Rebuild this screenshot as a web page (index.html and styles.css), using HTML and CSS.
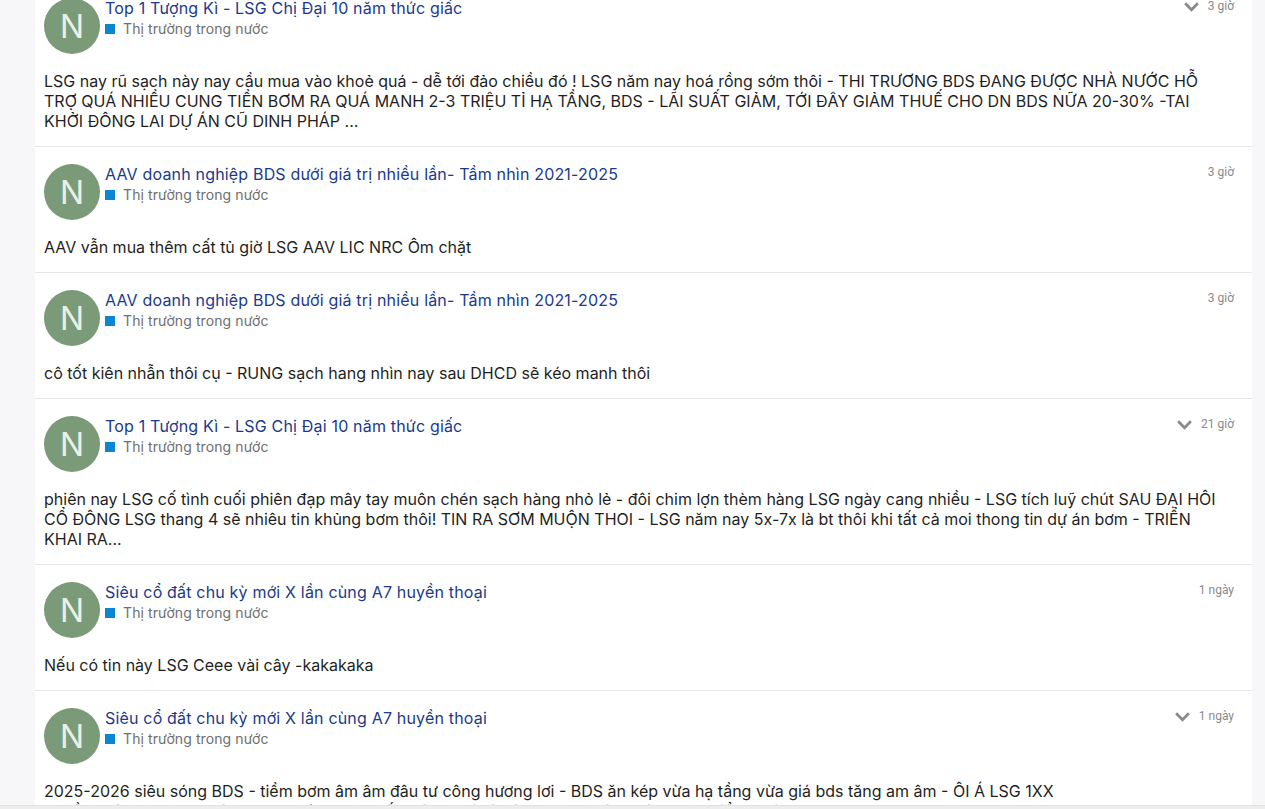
FILE: index.html
```html
<!DOCTYPE html>
<html lang="vi">
<head>
  <meta charset="UTF-8">
  <title>Thị trường trong nước</title>
  <link rel="stylesheet" href="styles.css">
</head>
<body>
  <main class="page">
    <!-- Danh sách bài viết -->
    <div class="feed">

      <article class="post">
        <div class="post-head">
          <div class="avatar">N</div>
          <div class="post-info">
            <a class="post-title" href="#">Top 1 Tượng Kì - LSG Chị Đại 10 năm thức giấc</a>
            <div class="post-cat"><span class="cat-dot"></span>Thị trường trong nước</div>
          </div>
          <div class="post-meta">
            <svg class="chevron" viewBox="0 0 16 10"><path d="M2 2l6 6 6-6"/></svg>
            <span class="post-time">3 giờ</span>
          </div>
        </div>
        <p class="post-body">LSG nay rũ sạch này nay cầu mua vào khoẻ quá - dễ tới đảo chiều đó ! LSG năm nay hoá rồng sớm thôi - THI TRƯƠNG BDS ĐANG ĐƯỢC NHÀ NƯỚC HỖ TRỢ QUÁ NHIỀU CUNG TIỀN BƠM RA QUÁ MANH 2-3 TRIỆU TỈ HẠ TẦNG, BDS - LÃI SUẤT GIẢM, TỚI ĐÂY GIẢM THUẾ CHO DN BDS NỮA 20-30% -TAI KHỞI ĐÔNG LAI DỰ ÁN CŨ DINH PHÁP ...</p>
      </article>

      <article class="post">
        <div class="post-head">
          <div class="avatar">N</div>
          <div class="post-info">
            <a class="post-title" href="#">AAV doanh nghiệp BDS dưới giá trị nhiều lần- Tầm nhìn 2021-2025</a>
            <div class="post-cat"><span class="cat-dot"></span>Thị trường trong nước</div>
          </div>
          <div class="post-meta">
            <span class="post-time">3 giờ</span>
          </div>
        </div>
        <p class="post-body">AAV vẫn mua thêm cất tủ giờ LSG AAV LIC NRC Ôm chặt</p>
      </article>

      <article class="post">
        <div class="post-head">
          <div class="avatar">N</div>
          <div class="post-info">
            <a class="post-title" href="#">AAV doanh nghiệp BDS dưới giá trị nhiều lần- Tầm nhìn 2021-2025</a>
            <div class="post-cat"><span class="cat-dot"></span>Thị trường trong nước</div>
          </div>
          <div class="post-meta">
            <span class="post-time">3 giờ</span>
          </div>
        </div>
        <p class="post-body">cô tốt kiên nhẫn thôi cụ - RUNG sạch hang nhìn nay sau DHCD sẽ kéo manh thôi</p>
      </article>

      <article class="post">
        <div class="post-head">
          <div class="avatar">N</div>
          <div class="post-info">
            <a class="post-title" href="#">Top 1 Tượng Kì - LSG Chị Đại 10 năm thức giấc</a>
            <div class="post-cat"><span class="cat-dot"></span>Thị trường trong nước</div>
          </div>
          <div class="post-meta">
            <svg class="chevron" viewBox="0 0 16 10"><path d="M2 2l6 6 6-6"/></svg>
            <span class="post-time">21 giờ</span>
          </div>
        </div>
        <p class="post-body">phiên nay LSG cố tình cuối phiên đạp mây tay muôn chén sạch hàng nhỏ lẻ - đôi chim lợn thèm hàng LSG ngày cang nhiều - LSG tích luỹ chút SAU ĐẠI HÔI CỔ ĐÔNG LSG thang 4 sẽ nhiêu tin khủng bơm thôi! TIN RA SƠM MUỘN THOI - LSG năm nay 5x-7x là bt thôi khi tất cả moi thong tin dự án bơm - TRIỂN KHAI RA...</p>
      </article>

      <article class="post">
        <div class="post-head">
          <div class="avatar">N</div>
          <div class="post-info">
            <a class="post-title" href="#">Siêu cổ đất chu kỳ mới X lần cùng A7 huyền thoại</a>
            <div class="post-cat"><span class="cat-dot"></span>Thị trường trong nước</div>
          </div>
          <div class="post-meta">
            <span class="post-time">1 ngày</span>
          </div>
        </div>
        <p class="post-body">Nếu có tin này LSG Ceee vài cây -kakakaka</p>
      </article>

      <article class="post">
        <div class="post-head">
          <div class="avatar">N</div>
          <div class="post-info">
            <a class="post-title" href="#">Siêu cổ đất chu kỳ mới X lần cùng A7 huyền thoại</a>
            <div class="post-cat"><span class="cat-dot"></span>Thị trường trong nước</div>
          </div>
          <div class="post-meta">
            <svg class="chevron" viewBox="0 0 16 10"><path d="M2 2l6 6 6-6"/></svg>
            <span class="post-time">1 ngày</span>
          </div>
        </div>
        <p class="post-body">2025-2026 siêu sóng BDS - tiềm bơm âm âm đâu tư công hương lơi - BDS ăn kép vừa hạ tầng vừa giá bds tăng am âm - ÔI Á LSG 1XX<br>hạ tầng sân bay long thành, 25 nghìn tỷ cao tốc, vành đai và hàng loạt dự án khác đang triển khai</p>
      </article>

    </div>
  </main>

  <!-- Thanh cuộn ngang -->
  <div class="hscroll"></div>
</body>
</html>
```

FILE: styles.css
```css
/* ------------------------------
   Base
   ------------------------------ */
:root {
  --page-bg: #f7f7f9;
  --card-bg: #ffffff;
  --line: #e6e6e6;
  --title-color: #1a3a8c;
  --text-color: #1f1f1f;
  --muted: #6e6e6e;
  --cat-color: #0b87d1;
  --avatar-bg: #7a9a78;
}

* {
  margin: 0;
  padding: 0;
  box-sizing: border-box;
}

body {
  background-color: var(--page-bg);
  color: var(--text-color);
  font-family: Inter, "Noto Sans", Arial, sans-serif;
  overflow: hidden;
}

a {
  text-decoration: none;
}

/* ------------------------------
   Layout
   ------------------------------ */
.page {
  padding: 0 13px 0 35px;
}

.feed {
  margin-top: -19px;
  background-color: var(--card-bg);
  display: flex;
  flex-direction: column;
}

/* ------------------------------
   Bài viết
   ------------------------------ */
.post {
  padding: 17px 18px 15px 9px;
  border-bottom: 1px solid var(--line);
}

.post-head {
  display: flex;
  align-items: flex-start;
  gap: 5px;
}

.avatar {
  flex: 0 0 56px;
  width: 56px;
  height: 56px;
  border-radius: 50%;
  background-color: var(--avatar-bg);
  color: #e9f0e7;
  font-size: 32px;
  display: flex;
  align-items: center;
  justify-content: center;
}

.post-info {
  flex: 1;
  display: flex;
  flex-direction: column;
}

.post-title {
  color: var(--title-color);
  font-size: 16px;
  line-height: 20px;
  letter-spacing: 0.18px;
}

.post-cat {
  display: flex;
  align-items: center;
  gap: 8px;
  font-size: 14px;
  line-height: 22px;
  letter-spacing: 0.1px;
  color: var(--muted);
}

.cat-dot {
  width: 10px;
  height: 10px;
  background-color: var(--cat-color);
}

.post-meta {
  display: flex;
  align-items: center;
  gap: 8px;
}

.chevron {
  width: 17px;
  height: 11px;
  fill: none;
  stroke: #8a8a8a;
  stroke-width: 2.6;
}

.post-time {
  font-family: Roboto, Arial, sans-serif;
  font-size: 12px;
  line-height: 16px;
  color: #8a8a8a;
}

.post-body {
  margin-top: 17px;
  padding-right: 12px;
  font-size: 16px;
  line-height: 20px;
  color: var(--text-color);
}

/* Thanh cuộn ngang */
.hscroll {
  position: fixed;
  left: 0;
  right: 0;
  bottom: 0;
  height: 4px;
  background-color: #ededed;
  border-top: 1px solid #e2e2e2;
}
```
